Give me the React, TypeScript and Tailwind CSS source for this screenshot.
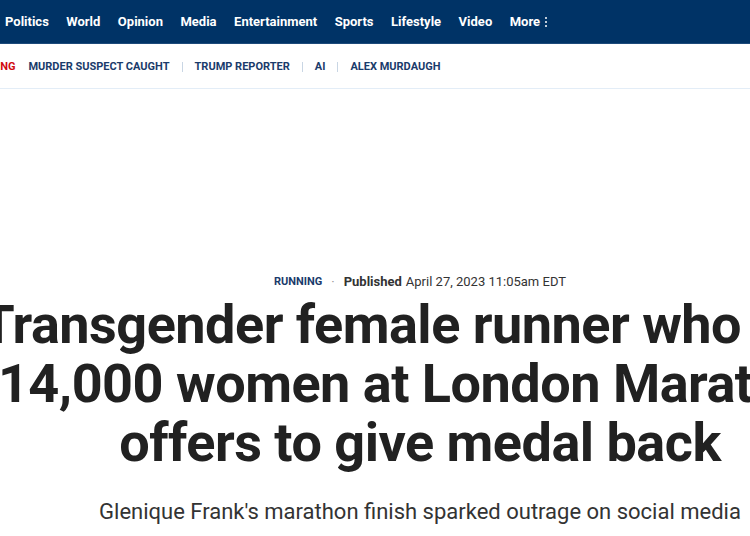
const navItems = ["Politics", "World", "Opinion", "Media", "Entertainment", "Sports", "Lifestyle", "Video"];
const trending = ["MURDER SUSPECT CAUGHT", "TRUMP REPORTER", "AI", "ALEX MURDAUGH"];

export default function App() {
  return (
    <div className="w-[750px] h-[536px] overflow-hidden bg-white font-['Roboto',sans-serif]">
      <nav className="h-[44px] bg-[#003366] border-b border-[#1d4a7a] flex items-center pl-[5px] gap-[17.5px] text-white text-[13px] font-bold">
        {navItems.map((item) => (
          <span key={item}>{item}</span>
        ))}
        <span className="flex items-center gap-[5px]">
          More
          <span className="flex flex-col gap-[2px]">
            <span className="w-[2px] h-[2px] bg-white rounded-full" />
            <span className="w-[2px] h-[2px] bg-white rounded-full" />
            <span className="w-[2px] h-[2px] bg-white rounded-full" />
          </span>
        </span>
      </nav>

      <div className="h-[45px] border-b border-[#e3edf7] flex items-center ml-[-38px] pt-[2px] text-[11px] font-bold uppercase text-[#1a3b6b] whitespace-nowrap">
        <span className="text-[#d10a10] mr-[13px]">Trending</span>
        {trending.map((t, i) => (
          <span key={t} className="flex items-center">
            {i > 0 && <span className="w-px h-[10px] bg-[#c9d6e4] mx-[12px]" />}
            {t}
          </span>
        ))}
      </div>

      <main className="w-[840px] flex flex-col items-center text-center pt-[183px]">
        <div className="flex items-center text-[13px] text-[#333]">
          <span className="text-[11px] font-bold uppercase text-[#1a3b6b]">Running</span>
          <span className="mx-[9px] text-[#999]">·</span>
          <span className="font-bold mr-[4px]">Published</span>
          <span>April 27, 2023 11:05am EDT</span>
        </div>
        <h1 className="mt-[3px] whitespace-nowrap text-[54px] leading-[59px] font-bold text-[#212121] tracking-[-0.5px]">
          Transgender female runner who beat
          <br />
          14,000 women at London Marathon
          <br />
          offers to give medal back
        </h1>
        <p className="mt-[23px] text-[22px] text-[#333] whitespace-nowrap">
          Glenique Frank's marathon finish sparked outrage on social media
        </p>
      </main>
    </div>
  );
}
